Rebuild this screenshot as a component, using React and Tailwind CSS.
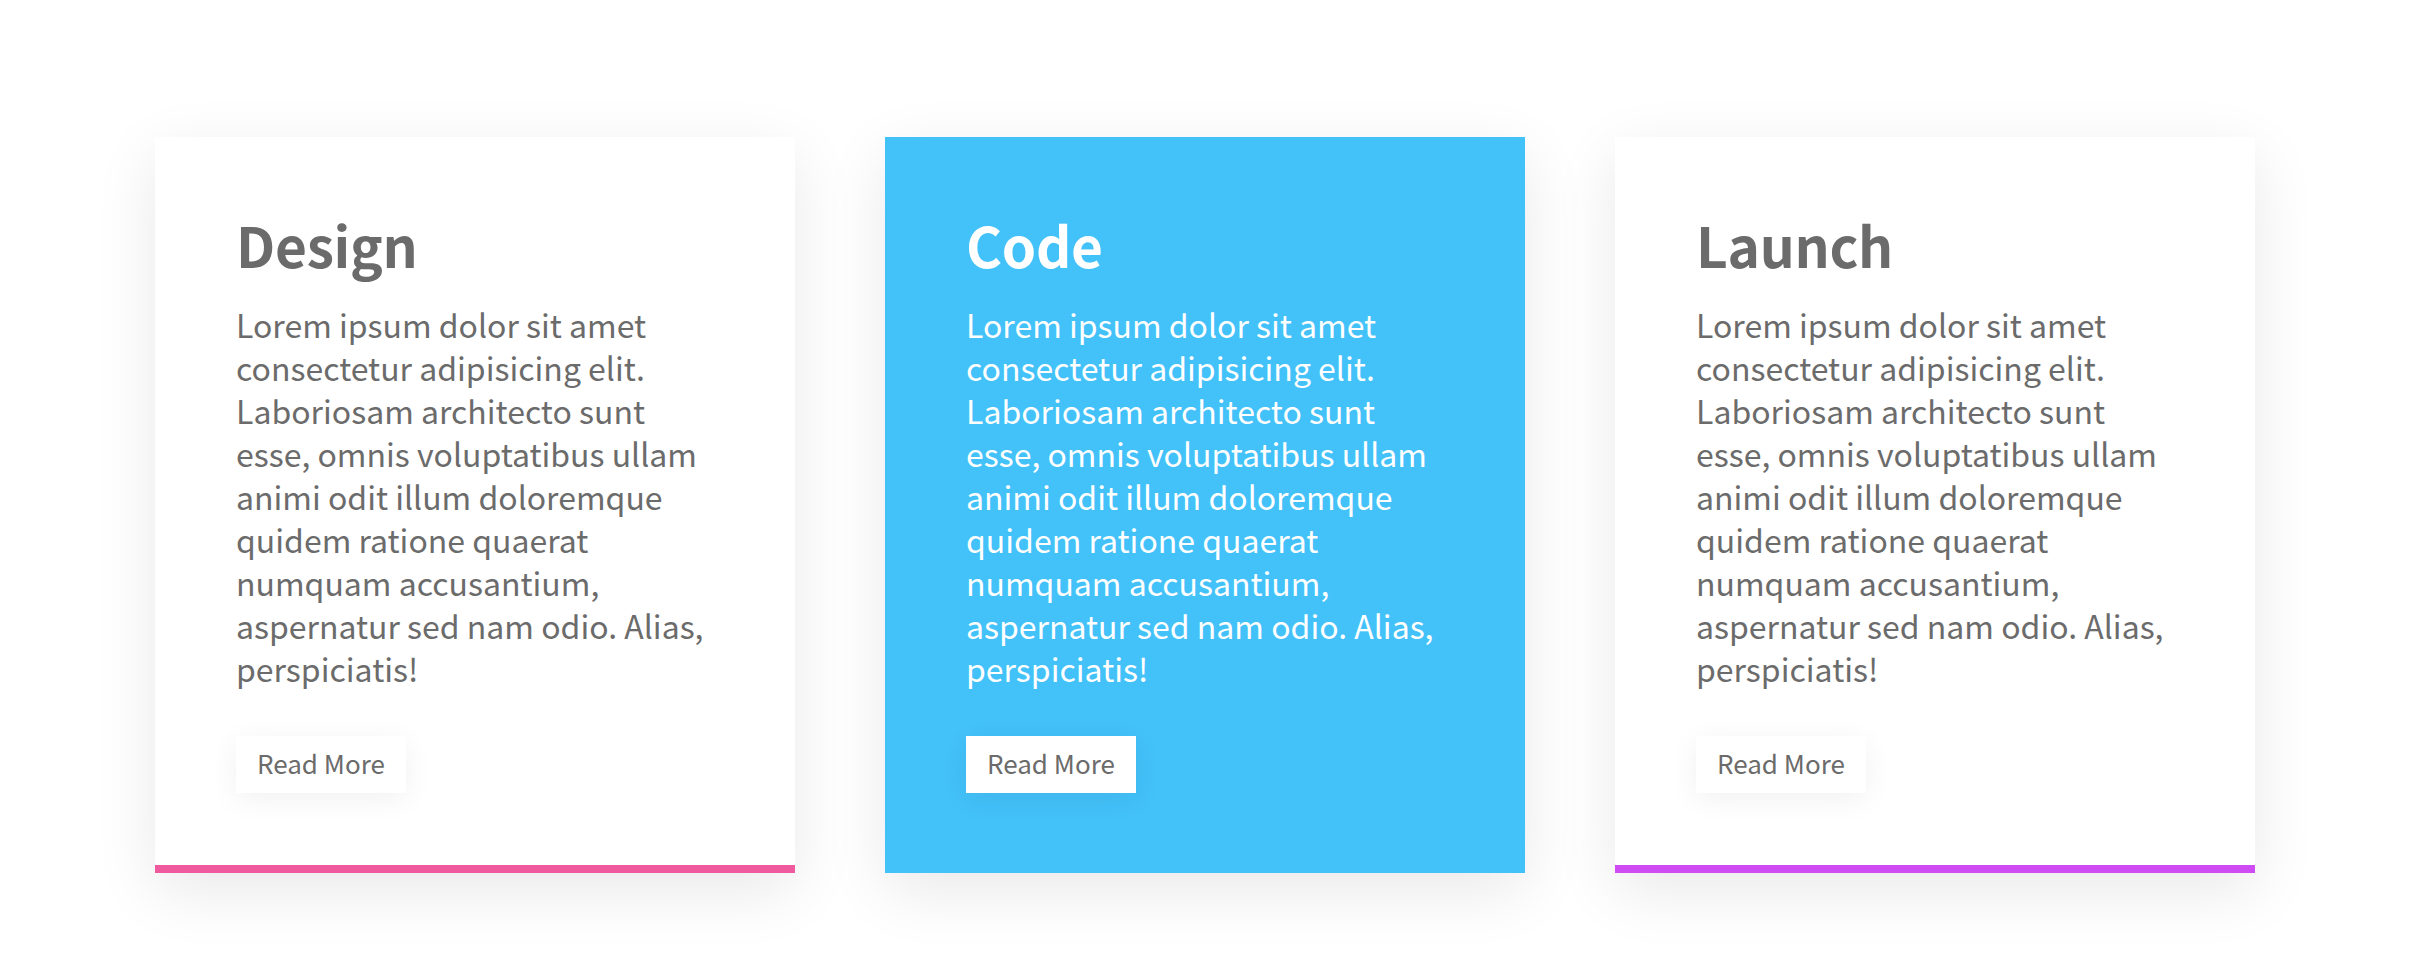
const cards = [
  { title: 'Design', accent: 'border-[#ef5a9f]', bg: 'bg-white', text: 'text-[#6b6b6b]' },
  { title: 'Code', accent: 'border-[#43c1f9]', bg: 'bg-[#43c1f9]', text: 'text-white' },
  { title: 'Launch', accent: 'border-[#cf4bf4]', bg: 'bg-white', text: 'text-[#6b6b6b]' },
];

const body =
  'Lorem ipsum dolor sit amet consectetur adipisicing elit. Laboriosam architecto sunt esse, omnis voluptatibus ullam animi odit illum doloremque quidem ratione quaerat numquam accusantium, aspernatur sed nam odio. Alias, perspiciatis!';

function Card({ title, accent, bg, text }) {
  return (
    <div
      className={`w-[640px] ${bg} border-b-[8px] ${accent} shadow-[0_18px_60px_rgba(0,0,0,0.09)] px-[81px] pt-[75px] pb-[72px]`}
    >
      <h2 className={`text-[55px] leading-[64px] font-bold tracking-[-0.3px] ${text}`}>{title}</h2>
      <p className={`mt-[27px] text-[32px] leading-[43px] ${text}`}>{body}</p>
      <button className="mt-[46px] h-[57px] px-[21px] pb-[4px] bg-white text-[#6b6b6b] text-[26px] flex items-center shadow-[0_6px_30px_rgba(0,0,0,0.06)]">
        Read More
      </button>
    </div>
  );
}

export default function App() {
  return (
    <div
      className="min-h-screen w-full bg-white"
      style={{ fontFamily: '"Noto Sans CJK KR", "Noto Sans", sans-serif' }}
    >
      <div className="flex gap-[90px] pl-[155px] pt-[137px]">
        {cards.map((c) => (
          <Card key={c.title} {...c} />
        ))}
      </div>
    </div>
  );
}
